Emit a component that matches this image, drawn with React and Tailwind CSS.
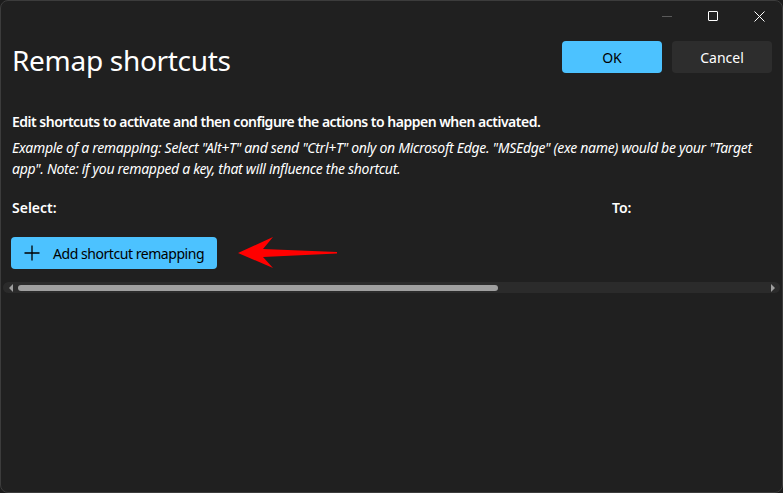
import React from "react";

export default function App() {
  const font = { fontFamily: '"Noto Sans", "Open Sans", sans-serif' };
  return (
    <div className="w-[783px] h-[493px] bg-[#1c1c1c]" style={font}>
      <div className="w-full h-full bg-[#202020] border border-[#3c3c3c] rounded-[8px] flex flex-col text-white overflow-hidden">
        {/* title bar */}
        <div className="h-[30px] flex justify-end items-center pr-0">
          <div className="w-[46px] h-[30px] flex items-center justify-center">
            <div className="w-[10px] h-px bg-[#5a5a5a]" />
          </div>
          <div className="w-[46px] h-[30px] flex items-center justify-center">
            <div className="w-[10px] h-[10px] border border-white rounded-[1px]" />
          </div>
          <div className="w-[46px] h-[30px] flex items-center justify-center">
            <svg width="11" height="11" viewBox="0 0 11 11">
              <path d="M0.5 0.5 L10.5 10.5 M10.5 0.5 L0.5 10.5" stroke="white" strokeWidth="1" />
            </svg>
          </div>
        </div>
        {/* header */}
        <div className="flex items-start justify-between pl-[11px] pr-[10px] mt-[10px]">
          <div className="text-[28px] leading-[40px] text-white tracking-[-0.3px] font-normal -mt-[1px]">Remap shortcuts</div>
          <div className="flex gap-[10px]">
            <div className="w-[100px] h-[32px] rounded-[4px] bg-[#4cc2ff] text-black text-[14px] flex items-center justify-center">OK</div>
            <div className="w-[100px] h-[32px] rounded-[4px] bg-[#2d2d2d] text-white text-[14px] flex items-center justify-center">Cancel</div>
          </div>
        </div>
        <div className="px-[11px] mt-[32px]">
          <div className="text-[14px] font-semibold leading-[20px] tracking-[-0.5px]">
            Edit shortcuts to activate and then configure the actions to happen when activated.
          </div>
          <div className="text-[14px] italic leading-[21px] mt-[5px] tracking-[-0.3px]">
            Example of a remapping: Select "Alt+T" and send "Ctrl+T" only on Microsoft Edge. "MSEdge" (exe name) would be your "Target app". Note: if you remapped a key, that will influence the shortcut.
          </div>
          <div className="flex text-[14px] font-semibold leading-[20px] mt-[19px]">
            <div className="w-[600px]">Select:</div>
            <div>To:</div>
          </div>
          <div className="flex items-center mt-[18px]">
            <div className="w-[206px] h-[32px] rounded-[4px] bg-[#4cc2ff] text-black text-[14px] flex items-center pl-[12px] -ml-px">
              <svg width="18" height="18" viewBox="0 0 18 18" className="mr-[12px]">
                <path d="M9 1.5 V16.5 M1.5 9 H16.5" stroke="black" strokeWidth="1.3" />
              </svg>
              <span className="tracking-[-0.45px]">Add shortcut remapping</span>
            </div>
            <svg width="110" height="34" viewBox="0 0 110 34" className="ml-[10px]">
              <polygon points="11,17 46,1 36,13 110,16 110,17.5 36,21 46,32" fill="#ff0000" />
            </svg>
          </div>
        </div>
        {/* scrollbar */}
        <div className="mx-[2px] mt-[12px] h-[11px] rounded-full bg-[#2b2b2b] flex items-center">
          <svg width="6" height="8" viewBox="0 0 6 8" className="ml-[5px]">
            <polygon points="5,0 5,8 1,4" fill="#9e9e9e" />
          </svg>
          <div className="ml-[4px] w-[480px] h-[6px] rounded-full bg-[#9f9f9f]" />
          <div className="flex-1" />
          <svg width="6" height="8" viewBox="0 0 6 8" className="mr-[4px]">
            <polygon points="1,0 1,8 5,4" fill="#9e9e9e" />
          </svg>
        </div>
      </div>
    </div>
  );
}
